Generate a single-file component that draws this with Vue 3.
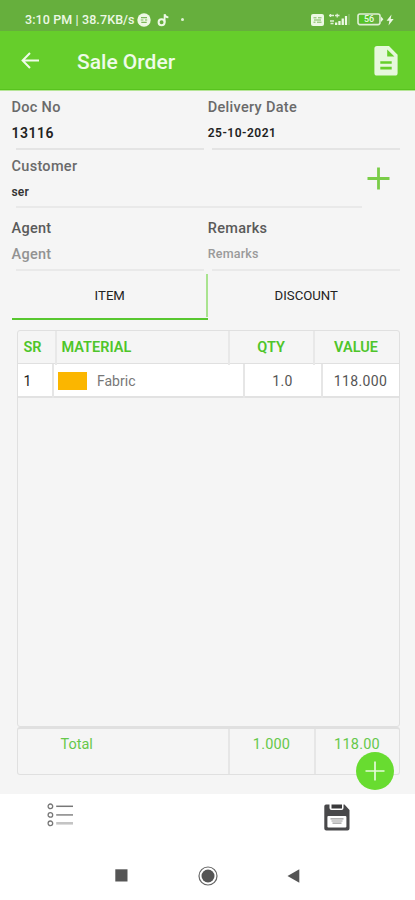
<template>
  <div class="page">
    <div class="status">
      <span class="clock">3:10 PM | 38.7KB/s</span>
      <svg class="chat" width="14" height="14" viewBox="0 0 14 14" aria-hidden="true"><circle cx="7" cy="7" r="6.7" fill="#edf8e5"/><path d="M4 4.6h6M3.8 7h2.6M8 7h2.2M4.3 9.4h5.4" stroke="#7bb75a" stroke-width="1.2"/></svg>
      <svg class="note" width="13" height="14" viewBox="0 0 13 14" aria-hidden="true"><circle cx="4.6" cy="9.3" r="3" fill="none" stroke="#edf8e5" stroke-width="2"/><path d="M7.6 9.5V1.2c.4 1.8 1.7 3 3.8 3.2" fill="none" stroke="#edf8e5" stroke-width="1.8"/></svg>
      <span class="dot"></span>
      <span class="spacer"></span>
      <svg class="volte" width="13" height="12" viewBox="0 0 13 12" aria-hidden="true"><rect width="13" height="12" rx="2" fill="#edf8e5"/><path d="M2.5 3.8h3M7 3.8h3.5M2.5 8.2h2M6 8.2h4.5M3 6h7" stroke="#7bb75a" stroke-width="1"/></svg>
      <svg class="signal" width="21" height="13" viewBox="0 0 21 13" aria-hidden="true"><path d="M0 2.5h5M1.5 1v3M6 2.5h4.5M8.2.8v3.6M1 8h4M1.5 10.5h3" stroke="#dff0d5" stroke-width="1.3"/><path d="M6 12V9.5h2.3V12zM9.3 12V8h2.3v4zM12.6 12V5.5h2.3V12zM15.9 12V3h2.2v9z" fill="#edf8e5"/><path d="M19.2 12V1h1.6v11z" fill="#85bd66"/></svg>
      <div class="battery">
        <svg width="27" height="13" viewBox="0 0 27 13" aria-hidden="true"><rect x="1" y="1" width="22" height="10.6" rx="2" fill="#68af40" stroke="#dff0d5" stroke-width="1.6"/><path d="M2.5 2.5h13v7.7h-13z" fill="#55c527"/><path d="M24 3.5l2.4 2.8L24 9z" fill="#edf8e5"/></svg>
        <span class="level">56</span>
      </div>
      <svg class="bolt" width="8" height="12" viewBox="0 0 8 12" aria-hidden="true"><path d="M5.5.5L.6 6.8h2.8L2.5 11.5 7.6 5H4.7z" fill="#edf8e5"/></svg>
    </div>

    <header class="appbar">
      <svg class="back" width="19" height="17" viewBox="0 0 19 17" aria-hidden="true"><path d="M18 8.5H2M9 1L1.6 8.5 9 16" fill="none" stroke="#f0fbe9" stroke-width="2"/></svg>
      <h1 class="title">Sale Order</h1>
      <svg class="doc" width="24" height="30" viewBox="0 0 24 30" aria-hidden="true"><path d="M3 0h12l8.6 8.8V27a2.6 2.6 0 0 1-2.6 2.6H3A2.6 2.6 0 0 1 .4 27V2.6A2.6 2.6 0 0 1 3 0z" fill="#e6f8dc"/><path d="M13.2 3.4v7.2h7.2zM6.3 15.2h11.4v2.6H6.3zM6.3 20.8h11.4v2.6H6.3z" fill="#66ce2b"/></svg>
    </header>

    <main class="content">
      <div class="row">
        <div class="field">
          <div class="label">Doc No</div>
          <div class="value big">13116</div>
        </div>
        <div class="field">
          <div class="label">Delivery Date</div>
          <div class="value">25-10-2021</div>
        </div>
      </div>

      <div class="row customer">
        <div class="field">
          <div class="label">Customer</div>
          <div class="value small">ser</div>
        </div>
        <button class="add" type="button" aria-label="Add">
          <svg width="23" height="23" viewBox="0 0 23 23"><path d="M11.5 0.5v22M.5 11.5h22" stroke="#7acd48" stroke-width="2.8"/></svg>
        </button>
      </div>

      <div class="row last">
        <div class="field">
          <div class="label dark">Agent</div>
          <div class="hint">Agent</div>
        </div>
        <div class="field">
          <div class="label dark">Remarks</div>
          <div class="hint small">Remarks</div>
        </div>
      </div>

      <div class="tabs">
        <button v-for="t in tabs" :key="t" type="button" class="tab" :class="{ active: t === current }" @click="current = t">{{ t }}</button>
      </div>

      <section class="table">
        <div class="thead">
          <span>SR</span><span>MATERIAL</span><span>QTY</span><span>VALUE</span>
        </div>
        <div class="trow" v-for="item in items" :key="item.sr">
          <span class="sr">{{ item.sr }}</span>
          <span class="material"><i class="swatch"></i>{{ item.name }}</span>
          <span class="num">{{ item.qty }}</span>
          <span class="num">{{ item.value }}</span>
        </div>
      </section>
      <div class="totals">
        <span class="name">Total</span><span>1.000</span><span>118.00</span>
        <button class="fab" type="button" aria-label="Add item">
          <svg width="20" height="20" viewBox="0 0 20 20"><path d="M10 .5v19M.5 10h19" stroke="#e5fbd9" stroke-width="1.7"/></svg>
        </button>
      </div>
    </main>

    <div class="actions">
      <svg class="list" width="28" height="24" viewBox="0 0 28 24" aria-hidden="true">
        <g fill="none" stroke="#777" stroke-width="1.3"><circle cx="3.4" cy="3.3" r="2.3"/><circle cx="3.4" cy="11.9" r="2.3"/><circle cx="3.4" cy="20.3" r="2.3"/></g>
        <path d="M9.2 3.3H26" stroke="#777" stroke-width="1.5"/><path d="M9.2 11.9H26" stroke="#999" stroke-width="1.8"/><path d="M9.2 20.3H26" stroke="#c4c4c4" stroke-width="2.6"/>
      </svg>
      <svg class="save" width="26" height="27" viewBox="0 0 26 27" aria-hidden="true">
        <path d="M2 .5h18.5L25.5 6v18.5a2 2 0 0 1-2 2H2.3a2 2 0 0 1-2-2V2.3A1.8 1.8 0 0 1 2 .5z" fill="#48484a"/>
        <path d="M5.5 0h14v4a2 2 0 0 1-2 2h-10a2 2 0 0 1-2-2z" fill="#fff"/>
        <path d="M7.5.5H18v4H7.5z" fill="#39393b"/>
        <rect x="3.4" y="12" width="19" height="11.4" rx="1" fill="#fff"/>
        <path d="M6.5 14.8h13M7.5 17h11M8.5 19.2h9" stroke="#999" stroke-width="1.2"/>
      </svg>
    </div>

    <nav class="sysnav">
      <svg width="13" height="13" viewBox="0 0 13 13" aria-hidden="true"><path d="M.3.3h12.2v12.2H.3z" fill="#555"/></svg>
      <svg width="20" height="20" viewBox="0 0 20 20" aria-hidden="true"><circle cx="10" cy="10" r="9" fill="none" stroke="#666" stroke-width="1.2"/><circle cx="10" cy="10" r="6.5" fill="#555"/></svg>
      <svg width="13" height="14" viewBox="0 0 13 14" aria-hidden="true"><path d="M.5 7L12.3.3v13.4z" fill="#555"/></svg>
    </nav>
  </div>
</template>

<script setup>
import { ref } from 'vue'

const tabs = ['ITEM', 'DISCOUNT']
const current = ref('ITEM')

const items = ref([
  { sr: 1, name: 'Fabric', qty: '1.0', value: '118.000' }
])
</script>

<style>
body { margin:0; background:#fff; }
</style>

<style scoped>
.page { width:415px; height:900px; background:#fff; font-family:Roboto, "Liberation Sans", sans-serif; overflow:hidden; }
.page * { box-sizing:border-box; }
button { background:transparent; border:none; padding:0; font-family:inherit; cursor:pointer; }
svg { display:block; flex-shrink:0; }

.status { height:31px; background:#66af3d; display:flex; align-items:center; padding:8px 21px 0 25px; color:#edf8e5; }
.clock { font-size:12.5px; font-weight:500; width:112px; white-space:nowrap; letter-spacing:0.1px; }
.note { margin-left:6px; }
.dot { width:3px; height:3px; border-radius:50%; background:#dff0d5; margin-left:11px; }
.spacer { flex:1; }
.volte { margin-right:5px; }
.signal { margin-right:7px; }
.battery { position:relative; }
.level { position:absolute; left:0; top:1px; width:24px; text-align:center; font-size:9px; line-height:11px; font-weight:500; }
.bolt { margin-left:2px; }

.appbar { height:59px; background:#66ce2b; display:flex; align-items:center; padding:0 17px 0 21px; border-bottom:1px solid #58c31e; }
.title { margin:4px 0 0 37px; flex:1; font-size:21px; font-weight:500; color:#effbe8; }
.doc { margin-top:1px; }

.content { height:704px; background:#f5f5f5; padding:0 15px 0 11.5px; border-top:1px solid #b5e596; }
.row { display:flex; gap:4px; height:59px; }
.row.customer { gap:0; height:58px; }
.row.last { height:63px; }
.field { width:192.5px; padding-top:8px; background:linear-gradient(#e4e4e4, #e4e4e4) 4px 100% / calc(100% - 4px) 2px no-repeat; }
.customer .field { width:350px; }
.last .field { padding-top:12px; }
.customer .field, .last .field { background-image:linear-gradient(#e9e9e9, #e9e9e9); }
.label { font-size:14.5px; line-height:18px; font-weight:500; letter-spacing:0.3px; color:#6a6a6a; }
.label.dark { color:#5a5a5a; }
.value { font-size:12px; line-height:18px; margin-top:7px; font-weight:600; letter-spacing:0.5px; color:#222; }
.value.big { font-size:14px; }
.value.small { letter-spacing:0.2px; color:#333; }
.hint { font-size:14.5px; line-height:18px; margin-top:8px; letter-spacing:0.3px; font-weight:500; color:#929292; }
.hint.small { font-size:12.5px; margin-top:7px; letter-spacing:0.2px; color:#9a9a9a; }
.add { margin:17px 0 0 5.5px; height:23px; }

.tabs { display:flex; height:50px; width:393px; }
.tab { flex:1; font-size:13.2px; color:#222; border-bottom:3px solid transparent; padding:1px 0 0; }
.tab.active { border-bottom:2px solid #58c72f; margin-bottom:1px; background:linear-gradient(#a9e38f, #a9e38f) 100% 3px / 2px 43px no-repeat; }

.table { height:397px; width:383px; margin:9px 0 0 5px; border:1px solid #e0e0e0; border-radius:3px; }
.thead { display:grid; grid-template-columns:37px 173px 85px 86px; height:33px; line-height:34px; font-size:14.5px; font-weight:600; color:#4ec52a; border-bottom:1px solid #e0e0e0; }
.thead span { text-align:center; }
.thead span:nth-child(1) { text-align:left; padding-left:6px; }
.thead span:nth-child(2) { text-align:left; padding-left:5px; }
.thead span:nth-child(4) { padding-right:1px; }
.thead span + span { border-left:2px solid #e8e8e8; }
.trow { display:grid; grid-template-columns:34px 191px 78px 78px; height:34px; line-height:34px; background:#fff; font-size:14px; color:#555; border-bottom:2px solid #e2e2e2; }
.trow > span + span { border-left:2px solid #e6e6e6; }
.sr { padding-left:6px; color:#222; }
.material { display:flex; align-items:center; gap:10px; padding-left:4.5px; color:#777; letter-spacing:0; }
.swatch { width:29px; height:18px; background:#fbb600; }
.num { text-align:center; letter-spacing:0.4px; }

.totals { position:relative; display:grid; grid-template-columns:210px 86px 85px; height:48px; width:383px; margin-left:5px; border:1px solid #e0e0e0; border-top-width:2px; border-radius:3px; font-size:14.5px; line-height:31px; color:#66c84a; letter-spacing:0.2px; }
.totals span { text-align:center; }
.totals span + span { border-left:2px solid #e6e6e6; }
.totals .name { text-align:left; padding-left:43px; letter-spacing:0; }
.fab { position:absolute; left:338.5px; top:23px; width:38px; height:38px; border-radius:50%; background:#68dc30; display:flex; align-items:center; justify-content:center; }

.actions { display:flex; justify-content:space-between; height:48px; padding:9px 65px 0 47px; }
.save { margin-top:1px; }
.sysnav { display:flex; justify-content:space-between; align-items:center; height:58px; padding:9px 115px 0; }
</style>
